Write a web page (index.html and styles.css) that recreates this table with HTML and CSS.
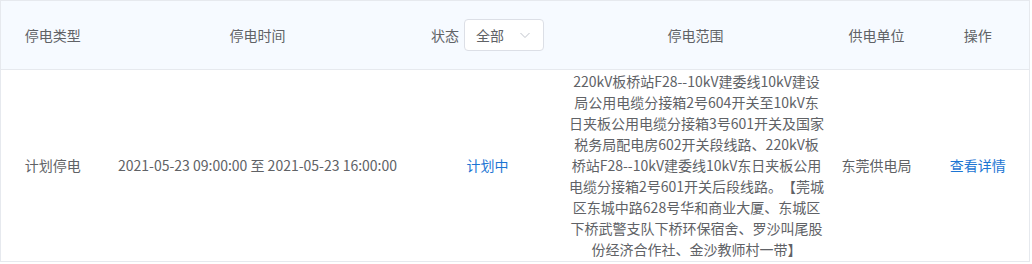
FILE: index.html
```html
<!DOCTYPE html>
<html lang="zh-CN">
<head>
<meta charset="utf-8">
<title>停电信息</title>
<link rel="stylesheet" href="styles.css">
</head>
<body>
<table class="outage-table">
  <colgroup>
    <col class="c-type">
    <col class="c-time">
    <col class="c-status">
    <col class="c-scope">
    <col class="c-unit">
    <col class="c-op">
  </colgroup>
  <thead>
    <tr>
      <th>停电类型</th>
      <th>停电时间</th>
      <th>
        <div class="status-filter">
          <span class="status-label">状态</span>
          <div class="select">
            <span class="select-value">全部</span>
            <svg class="select-arrow" width="12" height="12" viewBox="0 0 12 12" aria-hidden="true">
              <path d="M1.5 4 L6 8.5 L10.5 4" fill="none" stroke="#c0c4cc" stroke-width="1"/>
            </svg>
          </div>
        </div>
      </th>
      <th>停电范围</th>
      <th>供电单位</th>
      <th>操作</th>
    </tr>
  </thead>
  <tbody>
    <tr>
      <td>计划停电</td>
      <td>2021-05-23 09:00:00 至 2021-05-23 16:00:00</td>
      <td><span class="state">计划中</span></td>
      <td class="scope"><div class="scope-text">220kV板桥站F28--10kV建委线10kV建设局公用电缆分接箱2号604开关至10kV东日夹板公用电缆分接箱3号601开关及国家税务局配电房602开关段线路、220kV板桥站F28--10kV建委线10kV东日夹板公用电缆分接箱2号601开关后段线路。【莞城区东城中路628号华和商业大厦、东城区下桥武警支队下桥环保宿舍、罗沙叫尾股份经济合作社、金沙教师村一带】</div></td>
      <td>东莞供电局</td>
      <td><a class="link" href="#">查看详情</a></td>
    </tr>
  </tbody>
</table>
</body>
</html>
```

FILE: styles.css
```css
html, body {
  margin: 0;
  padding: 0;
  background: #ffffff;
}

body {
  font-family: "Noto Sans CJK SC", "Microsoft YaHei", sans-serif;
  font-size: 14px;
  color: #606266;
  text-spacing-trim: space-all;
}

.outage-table {
  width: 1029px;
  table-layout: fixed;
  border-collapse: collapse;
  border: 1px solid #e6e9ee;
}

.c-type { width: 104px; }
.c-time { width: 306px; }
.c-status { width: 154px; }
.c-scope { width: 262px; }
.c-unit { width: 100px; }
.c-op { width: 103px; }

.outage-table th {
  height: 68px;
  padding: 0;
  background: #f6faff;
  font-weight: normal;
  color: #606266;
  text-align: center;
  vertical-align: middle;
  border-bottom: 1px solid #e6e9ee;
}

.outage-table td {
  padding: 1px 0;
  text-align: center;
  vertical-align: middle;
  line-height: 21px;
  border-bottom: 1px solid #e6e9ee;
}

.outage-table td.scope {
  padding: 1px 4px;
}

.scope-text {
  width: 256px;
  margin: 0 auto;
}

.status-filter {
  display: flex;
  align-items: center;
  justify-content: center;
  gap: 5px;
}

.select {
  box-sizing: border-box;
  width: 80px;
  height: 32px;
  border: 1px solid #dcdfe6;
  border-radius: 4px;
  background: #ffffff;
  display: flex;
  align-items: center;
  justify-content: space-between;
  padding: 0 12px 0 11px;
}

.select-value {
  color: #606266;
}

.select-arrow {
  display: block;
}

.state {
  color: #1c75d3;
}

.link {
  color: #1c75d3;
  text-decoration: none;
}
```
